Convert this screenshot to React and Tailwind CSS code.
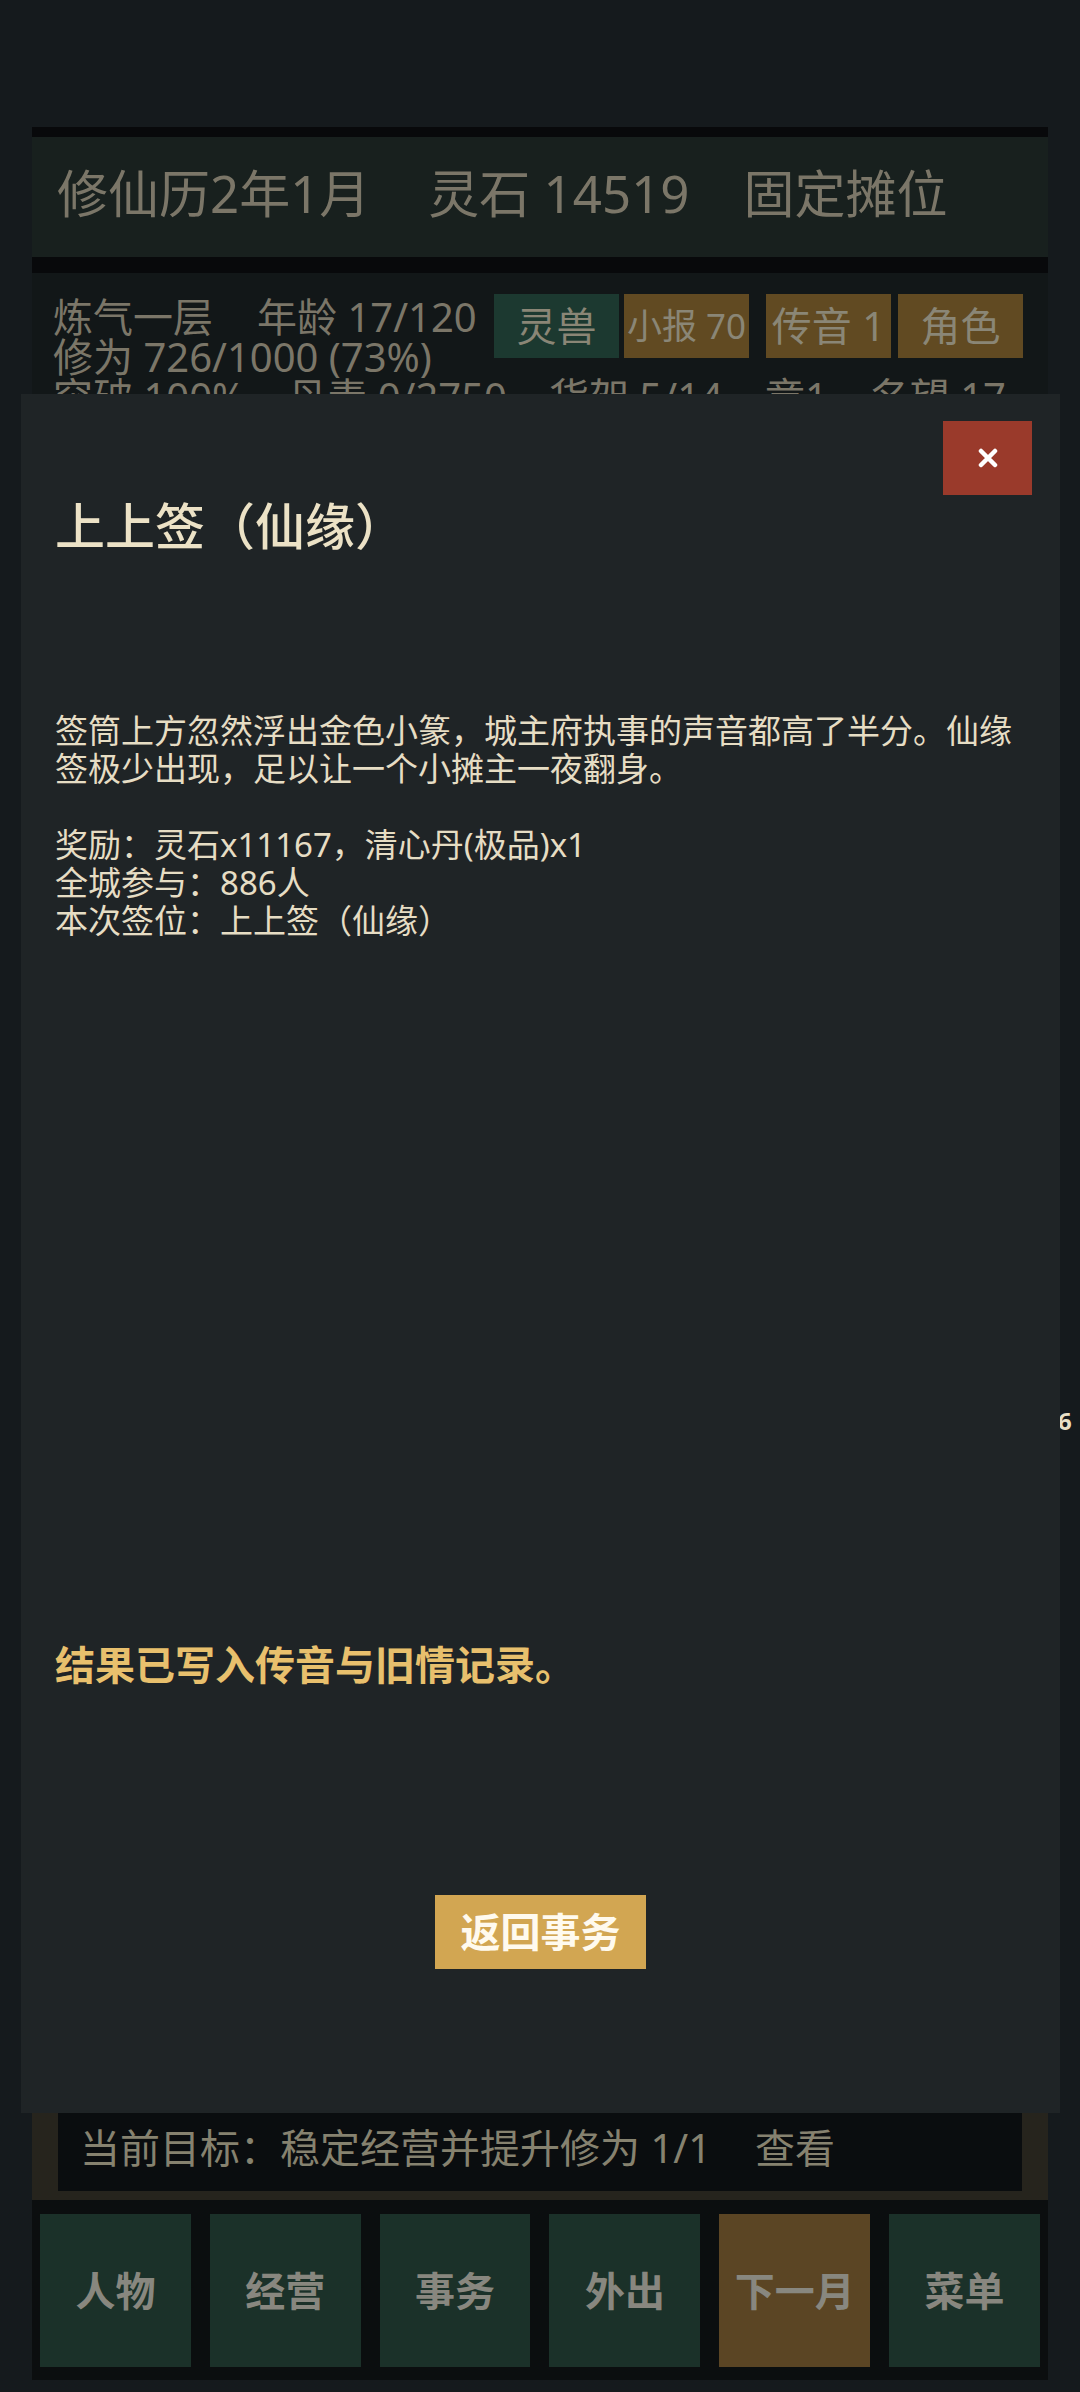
import React from "react";

const font = "font-['Noto_Sans','Noto_Sans_CJK_SC',sans-serif]";

function StatButton({ label, gold, small }) {
  return (
    <div
      className={`flex h-[64px] w-[125px] items-center justify-center whitespace-nowrap ${
        small ? "text-[35px]" : "text-[40px]"
      } ${gold ? "bg-[#614a22]" : "bg-[#1c3930]"} text-[#8a8676]`}
    >
      {label}
    </div>
  );
}

function NavButton({ label, gold }) {
  return (
    <div
      className={`flex h-[153px] items-center justify-center text-[40px] font-bold text-[#88877f] ${
        gold ? "bg-[#5b4524]" : "bg-[#1b3129]"
      }`}
    >
      {label}
    </div>
  );
}

function CloseIcon() {
  return (
    <svg width="20" height="20" viewBox="0 0 20 20">
      <path
        d="M3 3 L17 17 M17 3 L3 17"
        stroke="#ffffff"
        strokeWidth="4.5"
        strokeLinecap="round"
      />
    </svg>
  );
}

export default function App() {
  const navItems = ["人物", "经营", "事务", "外出", "下一月", "菜单"];

  return (
    <div className={`relative h-[2392px] w-[1080px] overflow-hidden bg-[#151a1d] ${font}`}>
      {/* page underneath the dialog */}
      <div className="flex h-full flex-col pt-[127px] pb-[12px]">
        <header className="mx-[32px] flex h-[146px] items-center border-t-[10px] border-b-[16px] border-[#08090b] bg-[#18201e] pl-[25px] pb-[8px] text-[51px] leading-none text-[#7b7668]">
          <span>修仙历2年1月</span>
          <span className="ml-[58px]">灵石 14519</span>
          <span className="ml-[54px]">固定摊位</span>
        </header>

        <section className="mx-[32px] flex-1 bg-[#121718] pt-[21px] pl-[21px] text-[40px] leading-[40px] text-[#7b7668]">
          <div className="flex items-start">
            <div className="mt-[3px] w-[441px]">
              <div className="flex whitespace-nowrap">
                <span>炼气一层</span>
                <span className="ml-[44px]">年龄 17/120</span>
              </div>
              <div className="whitespace-nowrap">修为 726/1000 (73%)</div>
            </div>
            <div className="flex">
              <StatButton label="灵兽" />
              <div className="ml-[5px]">
                <StatButton label="小报 70" gold small />
              </div>
              <div className="ml-[17px]">
                <StatButton label="传音 1" gold />
              </div>
              <div className="ml-[7px]">
                <StatButton label="角色" gold />
              </div>
            </div>
          </div>
          <div className="flex gap-[42px] whitespace-nowrap">
            <span>突破 100%</span>
            <span>丹毒 0/2750</span>
            <span>货架 5/14</span>
            <span>章1</span>
            <span>名望 17</span>
          </div>
        </section>

        <div className="mx-[32px] bg-[#26241d] px-[26px] pb-[9px]">
          <div className="flex h-[78px] items-start bg-[#0a0d0f] pt-[15px] pl-[22px] text-[40px] leading-[40px] text-[#86826f] whitespace-nowrap">
            <span>当前目标：稳定经营并提升修为 1/1</span>
            <span className="ml-[44px]">查看</span>
          </div>
        </div>

        <nav className="mx-[32px] grid grid-cols-6 gap-[19px] bg-[#0b0e0f] px-[8px] pt-[14px] pb-[13px]">
          {navItems.map((item) => (
            <NavButton key={item} label={item} gold={item === "下一月"} />
          ))}
        </nav>
      </div>

      {/* bits of the page peeking out at the right edge */}
      <div className="absolute left-[1058px] top-[1236px] h-[34px] w-[2px] bg-[#6a6f72]" />
      <div className="absolute left-[1058px] top-[1409px] text-[24px] font-bold leading-none text-[#e8dfc6]">
        6
      </div>
      <div className="absolute left-[1058px] top-[1460px] h-[26px] w-[2px] bg-[#55595c]" />
      <div className="absolute left-[1058px] top-[1720px] h-[16px] w-[2px] bg-[#55595c]" />

      {/* dialog */}
      <div className="absolute left-[21px] top-[394px] h-[1719px] w-[1039px] bg-[#1f2426] px-[34px] pt-[102px]">
        <button className="absolute right-[28px] top-[27px] flex h-[74px] w-[89px] items-center justify-center bg-[#9a3a2b]">
          <CloseIcon />
        </button>

        <h1 className="text-[50px] font-medium leading-[60px] text-[#ece2c6]">
          上上签（仙缘）
        </h1>

        <div className="mt-[156px] text-[33px] leading-[38px] text-[#e6ddc4]">
          <div>签筒上方忽然浮出金色小篆，城主府执事的声音都高了半分。仙缘</div>
          <div>签极少出现，足以让一个小摊主一夜翻身。</div>
          <div className="h-[38px]" />
          <div>奖励：灵石x11167，清心丹(极品)x1</div>
          <div>全城参与：886人</div>
          <div>本次签位：上上签（仙缘）</div>
        </div>

        <p className="mt-[701px] text-[40px] font-bold leading-[48px] text-[#e8c06d]">
          结果已写入传音与旧情记录。
        </p>

        <button className="mx-auto mt-[206px] flex h-[74px] w-[211px] items-center justify-center bg-[#d2a652] text-[40px] font-bold text-[#fffaee]">
          返回事务
        </button>
      </div>
    </div>
  );
}
